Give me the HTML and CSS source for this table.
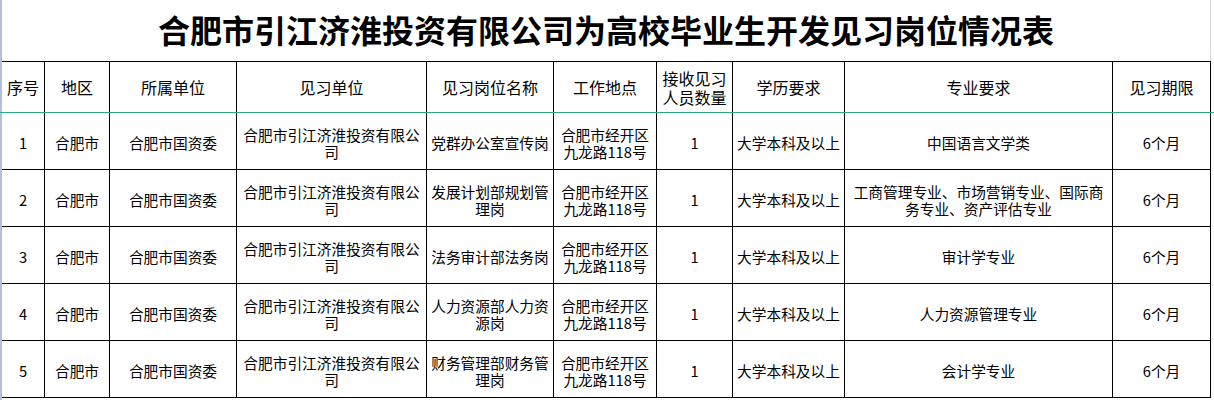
FILE: index.html
```html
<!DOCTYPE html>
<html lang="zh-CN">
<head>
<meta charset="utf-8">
<title>合肥市引江济淮投资有限公司为高校毕业生开发见习岗位情况表</title>
<link rel="stylesheet" href="styles.css">
</head>
<body>
<div class="page">
  <div class="title">合肥市引江济淮投资有限公司为高校毕业生开发见习岗位情况表</div>
  <div class="sheet">
    <div class="cell head">序号</div>
    <div class="cell head">地区</div>
    <div class="cell head">所属单位</div>
    <div class="cell head">见习单位</div>
    <div class="cell head">见习岗位名称</div>
    <div class="cell head">工作地点</div>
    <div class="cell head">接收见习<br>人员数量</div>
    <div class="cell head">学历要求</div>
    <div class="cell head">专业要求</div>
    <div class="cell head">见习期限</div>

    <div class="cell">1</div>
    <div class="cell">合肥市</div>
    <div class="cell">合肥市国资委</div>
    <div class="cell">合肥市引江济淮投资有限公<br>司</div>
    <div class="cell">党群办公室宣传岗</div>
    <div class="cell">合肥市经开区<br>九龙路118号</div>
    <div class="cell">1</div>
    <div class="cell">大学本科及以上</div>
    <div class="cell">中国语言文学类</div>
    <div class="cell">6个月</div>

    <div class="cell">2</div>
    <div class="cell">合肥市</div>
    <div class="cell">合肥市国资委</div>
    <div class="cell">合肥市引江济淮投资有限公<br>司</div>
    <div class="cell">发展计划部规划管<br>理岗</div>
    <div class="cell">合肥市经开区<br>九龙路118号</div>
    <div class="cell">1</div>
    <div class="cell">大学本科及以上</div>
    <div class="cell">工商管理专业、市场营销专业、国际商<br>务专业、资产评估专业</div>
    <div class="cell">6个月</div>

    <div class="cell">3</div>
    <div class="cell">合肥市</div>
    <div class="cell">合肥市国资委</div>
    <div class="cell">合肥市引江济淮投资有限公<br>司</div>
    <div class="cell">法务审计部法务岗</div>
    <div class="cell">合肥市经开区<br>九龙路118号</div>
    <div class="cell">1</div>
    <div class="cell">大学本科及以上</div>
    <div class="cell">审计学专业</div>
    <div class="cell">6个月</div>

    <div class="cell">4</div>
    <div class="cell">合肥市</div>
    <div class="cell">合肥市国资委</div>
    <div class="cell">合肥市引江济淮投资有限公<br>司</div>
    <div class="cell">人力资源部人力资<br>源岗</div>
    <div class="cell">合肥市经开区<br>九龙路118号</div>
    <div class="cell">1</div>
    <div class="cell">大学本科及以上</div>
    <div class="cell">人力资源管理专业</div>
    <div class="cell">6个月</div>

    <div class="cell">5</div>
    <div class="cell">合肥市</div>
    <div class="cell">合肥市国资委</div>
    <div class="cell">合肥市引江济淮投资有限公<br>司</div>
    <div class="cell">财务管理部财务管<br>理岗</div>
    <div class="cell">合肥市经开区<br>九龙路118号</div>
    <div class="cell">1</div>
    <div class="cell">大学本科及以上</div>
    <div class="cell">会计学专业</div>
    <div class="cell">6个月</div>
  </div>
</div>
<div class="selection-line"></div>
</body>
</html>
```
FILE: styles.css
```css
html, body {
  margin: 0;
  padding: 0;
  background: #ffffff;
}

body {
  position: relative;
  width: 1214px;
  height: 400px;
  overflow: hidden;
  font-family: "Noto Sans CJK SC", "Noto Sans", sans-serif;
  color: #000000;
}

.page {
  width: 1209px;
  height: 400px;
  border-left: 2px solid #b6bfd3;
}

.title {
  box-sizing: border-box;
  width: 1209px;
  height: 61px;
  border-right: 1px solid #d3d7e1;
  display: flex;
  align-items: center;
  justify-content: center;
  padding-bottom: 4px;
  font-size: 32px;
  font-weight: 700;
  line-height: 38px;
  letter-spacing: 0;
}

.sheet {
  display: grid;
  grid-template-columns: 42px 64px 126px 189px 126px 102px 75px 111px 267px 97px;
  grid-template-rows: 50px repeat(5, 56px);
  gap: 1px;
  padding: 1px 1px 1px 0;
  width: 1208px;
  background: #000000;
}

.cell {
  background: #ffffff;
  display: flex;
  align-items: center;
  justify-content: center;
  text-align: center;
  font-size: 14.7px;
  line-height: 17px;
  padding: 3px 1px 0;
  overflow: hidden;
}

.head {
  font-size: 16px;
  line-height: 19.5px;
  padding-top: 2px;
}

.selection-line {
  position: absolute;
  left: 0;
  top: 112px;
  width: 1214px;
  height: 1px;
  background: #21b07b;
}
```
